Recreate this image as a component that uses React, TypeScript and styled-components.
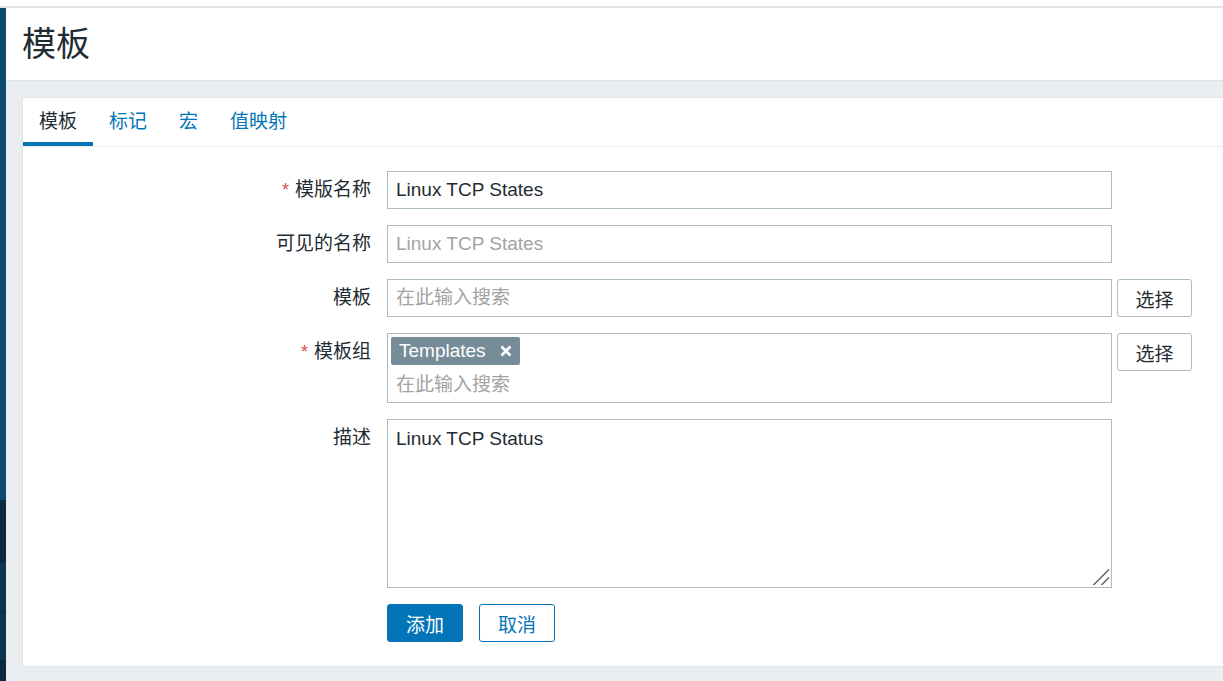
import React from "react";
import styled, { createGlobalStyle } from "styled-components";

const FONT = `"Liberation Sans", "Noto Sans CJK SC", sans-serif`;
const TEXT = "#1f2c33";
const BLUE = "#0275b8";
const BORDER = "#acbbc4";
const FIELD_W = 725;

const GlobalStyle = createGlobalStyle`
  html, body { margin: 0; padding: 0; height: 100%; overflow: hidden; background: #fff; }
  body { font-family: ${FONT}; color: ${TEXT}; }
  #root { height: 100%; }
  * { box-sizing: border-box; }
  input::placeholder, textarea::placeholder { color: #a3a3a3; opacity: 1; }
`;

const Page = styled.div`
  display: flex;
  flex-direction: column;
  height: 100vh;
`;

const TopStrip = styled.div`
  height: 8px;
  flex: none;
  background: #fff;
  border-bottom: 2px solid #e2e2e2;
`;

const Body = styled.div`
  flex: 1;
  display: flex;
  min-height: 0;
`;

const Sidebar = styled.nav`
  width: 6px;
  flex: none;
  display: flex;
  flex-direction: column;
`;

const NavSegment = styled.div<{ $h?: number; $bg: string; $line?: boolean }>`
  height: ${(p) => (p.$h ? `${p.$h}px` : "auto")};
  flex: ${(p) => (p.$h ? "none" : "1")};
  background: ${(p) => p.$bg};
  border-bottom: ${(p) => (p.$line ? "1px solid #082536" : "none")};
`;

const Main = styled.main`
  flex: 1;
  display: flex;
  flex-direction: column;
  background: #ebeef0;
  min-width: 0;
`;

const Header = styled.header`
  height: 73px;
  flex: none;
  background: #fff;
  border-bottom: 1px solid #dfe4e7;
  display: flex;
  align-items: center;
  padding-left: 16px;
`;

const Title = styled.h1`
  margin: 0;
  font-size: 34px;
  font-weight: normal;
  color: ${TEXT};
  line-height: 1;
`;

const Content = styled.div`
  padding: 16px 0 0 16px;
`;

const Panel = styled.section`
  background: #fff;
  border: 1px solid #dfe4e7;
  border-right: none;
`;

const TabBar = styled.div`
  display: flex;
  border-bottom: 1px solid #ebeef0;
`;

const Tab = styled.div<{ $active?: boolean }>`
  height: 48px;
  padding: 0 16px 5px;
  display: flex;
  align-items: center;
  font-size: 19px;
  color: ${(p) => (p.$active ? TEXT : BLUE)};
  box-shadow: ${(p) => (p.$active ? `inset 0 -4px 0 ${BLUE}` : "none")};
`;

const Form = styled.div`
  padding: 24px 0 24px 0;
  display: flex;
  flex-direction: column;
  gap: 16px;
`;

const Row = styled.div`
  display: flex;
  align-items: flex-start;
`;

const Label = styled.label<{ $required?: boolean }>`
  width: 348px;
  flex: none;
  text-align: right;
  font-size: 19px;
  line-height: 38px;
  color: ${TEXT};
  margin-right: 16px;
  &::before {
    content: ${(p) => (p.$required ? `"*"` : `""`)};
    color: #d64e4e;
    margin-right: 6px;
    font-size: 18px;
  }
`;

const TextInput = styled.input`
  width: ${FIELD_W}px;
  height: 38px;
  border: 1px solid ${BORDER};
  padding: 0 8px;
  font-family: ${FONT};
  font-size: 19px;
  color: ${TEXT};
  background: #fff;
  outline: none;
`;

const SelectButton = styled.button`
  margin-left: 5px;
  width: 75px;
  height: 38px;
  border: 1px solid ${BORDER};
  border-radius: 3px;
  background: #fff;
  color: ${TEXT};
  font-family: ${FONT};
  font-size: 19px;
  padding: 0;
`;

const MultiSelect = styled.div`
  width: ${FIELD_W}px;
  height: 70px;
  border: 1px solid ${BORDER};
  padding: 3px;
  display: flex;
  flex-direction: column;
  align-items: flex-start;
`;

const Tag = styled.span`
  height: 28px;
  display: inline-flex;
  align-items: center;
  gap: 14px;
  padding: 0 8px;
  background: #768d99;
  color: #fff;
  border-radius: 2px;
  font-size: 19px;
`;

const SearchInput = styled.input`
  width: 100%;
  height: 33px;
  border: none;
  padding: 6px 5px 0;
  font-family: ${FONT};
  font-size: 19px;
  color: ${TEXT};
  outline: none;
  background: transparent;
`;

const TextAreaBox = styled.div`
  position: relative;
  width: ${FIELD_W}px;
  height: 169px;
`;

const TextArea = styled.textarea`
  width: 100%;
  height: 100%;
  border: 1px solid ${BORDER};
  padding: 8px;
  font-family: ${FONT};
  font-size: 19px;
  line-height: 22px;
  color: ${TEXT};
  resize: none;
  outline: none;
  display: block;
`;

const ResizeGrip = styled.svg`
  position: absolute;
  right: 2px;
  bottom: 2px;
  pointer-events: none;
`;

const Actions = styled.div`
  display: flex;
  gap: 16px;
  margin-left: 364px;
`;

const Button = styled.button<{ $primary?: boolean }>`
  height: 38px;
  padding: 0 18px;
  border: 1px solid ${BLUE};
  border-radius: 3px;
  background: ${(p) => (p.$primary ? BLUE : "#fff")};
  color: ${(p) => (p.$primary ? "#fff" : BLUE)};
  font-family: ${FONT};
  font-size: 19px;
`;

const CloseIcon = () => (
  <svg width="12" height="12" viewBox="0 0 12 12" aria-hidden="true">
    <path d="M1.5 1.5 L10.5 10.5 M10.5 1.5 L1.5 10.5" stroke="#fff" strokeWidth="2.6" strokeLinecap="butt" />
  </svg>
);

export default function App() {
  return (
    <Page>
      <GlobalStyle />
      <TopStrip />
      <Body>
        <Sidebar>
          <NavSegment $h={492} $bg="#0b4a6f" />
          <NavSegment $h={63} $bg="#0a2a3e" />
          <NavSegment $h={49} $bg="#0d3451" $line />
          <NavSegment $h={49} $bg="#0d3451" $line />
          <NavSegment $bg="#0a2a3e" />
        </Sidebar>
        <Main>
          <Header>
            <Title>模板</Title>
          </Header>
          <Content>
            <Panel>
              <TabBar>
                <Tab $active>模板</Tab>
                <Tab>标记</Tab>
                <Tab>宏</Tab>
                <Tab>值映射</Tab>
              </TabBar>
              <Form>
                <Row>
                  <Label $required>模版名称</Label>
                  <TextInput defaultValue="Linux TCP States" />
                </Row>
                <Row>
                  <Label>可见的名称</Label>
                  <TextInput placeholder="Linux TCP States" />
                </Row>
                <Row>
                  <Label>模板</Label>
                  <TextInput placeholder="在此输入搜索" />
                  <SelectButton>选择</SelectButton>
                </Row>
                <Row>
                  <Label $required>模板组</Label>
                  <MultiSelect>
                    <Tag>
                      Templates
                      <CloseIcon />
                    </Tag>
                    <SearchInput placeholder="在此输入搜索" />
                  </MultiSelect>
                  <SelectButton>选择</SelectButton>
                </Row>
                <Row>
                  <Label>描述</Label>
                  <TextAreaBox>
                    <TextArea defaultValue="Linux TCP Status" />
                    <ResizeGrip width="18" height="18" viewBox="0 0 18 18" aria-hidden="true">
                      <path d="M1.5 17 L17 1.5 M9.5 17 L17 9.5" stroke="#6b6b6b" strokeWidth="1.6" />
                    </ResizeGrip>
                  </TextAreaBox>
                </Row>
                <Actions>
                  <Button $primary>添加</Button>
                  <Button>取消</Button>
                </Actions>
              </Form>
            </Panel>
          </Content>
        </Main>
      </Body>
    </Page>
  );
}
